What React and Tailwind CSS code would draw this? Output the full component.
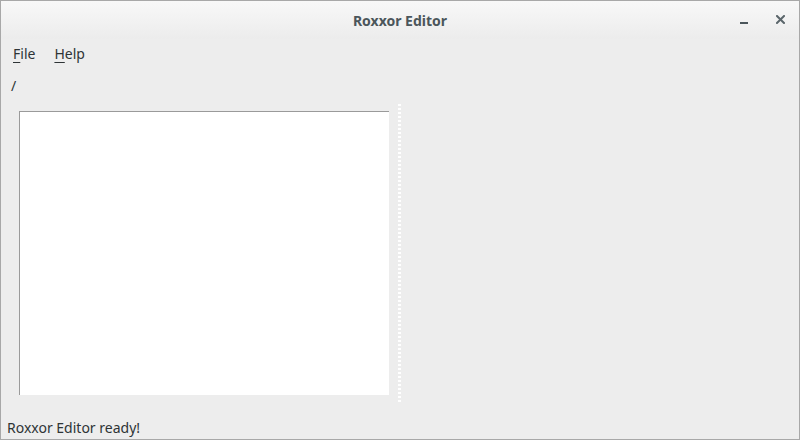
import React from "react";

const font = { fontFamily: '"Noto Sans", "Open Sans", sans-serif' };

const App = () => {
  return (
    <div
      className="w-[800px] h-[440px] flex flex-col bg-[#ededed] border border-[#a8a8a8] text-[#2e3436] overflow-hidden"
      style={font}
    >
      {/* Barre de titre */}
      <div className="relative h-[38px] shrink-0 flex items-center justify-center bg-gradient-to-b from-[#f8f8f8] to-[#ececec]">
        <span className="text-[14px] font-bold text-[#4b565b]">Roxxor Editor</span>
        <div className="absolute right-0 top-0 h-full flex items-center">
          <div className="w-[8px] h-[2px] bg-[#4b565b] mt-[6px] mr-[28px]" />
          <svg className="w-[9px] h-[9px] mr-[14px] mb-[1px]" viewBox="0 0 9 9">
            <path d="M1 1L8 8M8 1L1 8" stroke="#5b666b" strokeWidth="2" strokeLinecap="square" />
          </svg>
        </div>
      </div>

      {/* Menu */}
      <div className="h-[30px] shrink-0 flex items-center pl-[12px] pb-[2px] gap-[19px] text-[14px]">
        <span>
          <span className="underline underline-offset-[3px]">F</span>ile
        </span>
        <span>
          <span className="underline underline-offset-[3px]">H</span>elp
        </span>
      </div>

      {/* Chemin */}
      <div className="h-[34px] shrink-0 flex items-center pl-[10px] text-[14px] -mt-[1px]">/</div>

      {/* Zone principale */}
      <div className="flex-1 flex">
        <div className="pl-[18px] pt-[9px] pb-[8px] pr-[9px] flex">
          <div className="w-[370px] bg-white border-l border-t border-[#9a9a9a]" />
        </div>
        <div className="w-[3px] mt-[2px] bg-[repeating-linear-gradient(to_bottom,#ffffff_0,#ffffff_2px,transparent_2px,transparent_4px)]" />
        <div className="flex-1" />
      </div>

      {/* Statut */}
      <div className="h-[36px] shrink-0 flex items-center pl-[6px] text-[14px] pt-[13px]">
        Roxxor Editor ready!
      </div>
    </div>
  );
};

export default App;
